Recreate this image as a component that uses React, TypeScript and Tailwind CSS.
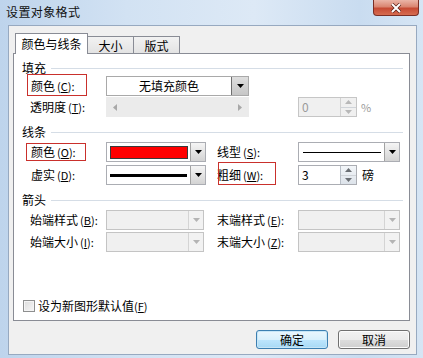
import React from "react";

function Down({ color = "#000" }: { color?: string }) {
  return (
    <svg width="7" height="4" viewBox="0 0 7 4">
      <path d="M0 0H7L3.5 4Z" fill={color} />
    </svg>
  );
}

function Acc({ k }: { k: string }) {
  return (
    <span className="ml-[2px] text-[11px]">
      (<span className="underline underline-offset-[1px]">{k}</span>):
    </span>
  );
}

function Header({ text }: { text: string }) {
  return (
    <div className="flex items-center h-[14px] ml-[8px] mr-[6px]">
      <span>{text}</span>
      <div className="flex-1 h-px bg-[#d5dde6] ml-[5px]" />
    </div>
  );
}

function BtnGray() {
  return (
    <div className="h-full w-[15px] border-l border-[#a2a2a2] bg-gradient-to-b from-[#f5f5f5] to-[#d3d3d3] flex items-center justify-center">
      <Down />
    </div>
  );
}

function BtnDisabled() {
  return (
    <div className="h-full w-[15px] border-l border-[#d4d4d4] bg-[#f2f2f2] flex items-center justify-center">
      <Down color="#b4b4b4" />
    </div>
  );
}

function DisCombo({ w }: { w: "a" | "b" }) {
  return (
    <div
      className={`h-full flex border border-[#c4c4c4] bg-[#f0f0f0] ${
        w === "a" ? "w-[98px]" : "w-[102px]"
      }`}
    >
      <div className="flex-1" />
      <BtnDisabled />
    </div>
  );
}

function Spinner({ value, disabled }: { value: string; disabled?: boolean }) {
  return (
    <div
      className={`w-[59px] h-full flex border ${
        disabled ? "border-[#c6c6c6] bg-[#f0f0f0] text-[#9a9a9a]" : "border-[#abadb3] bg-white text-black"
      }`}
    >
      <div className="flex-1 pl-[3px] flex items-center">{value}</div>
      <div
        className={`w-[16px] h-full flex flex-col border-l ${
          disabled ? "border-[#d2d2d2]" : "border-[#b9bfc7] bg-gradient-to-b from-[#f3f6f9] to-[#dde3ea]"
        }`}
      >
        <div className="flex-1 flex items-center justify-center border-b border-[#d0d4d9]">
          <svg width="7" height="4" viewBox="0 0 7 4">
            <path d="M0 4H7L3.5 0Z" fill={disabled ? "#b8b8b8" : "#6b6f74"} />
          </svg>
        </div>
        <div className="flex-1 flex items-center justify-center">
          <Down color={disabled ? "#b8b8b8" : "#6b6f74"} />
        </div>
      </div>
    </div>
  );
}

function RedBox({ cls }: { cls: string }) {
  return <span className={`absolute border border-[#c9302c] pointer-events-none ${cls}`} />;
}

function WinButton({ children, def }: { children: React.ReactNode; def?: boolean }) {
  return (
    <div
      className={`w-[72px] h-[19px] rounded-[3px] border flex items-center justify-center ${
        def
          ? "border-[#3c7fb1] bg-[linear-gradient(180deg,#eaf6fd_0%,#d9f0fc_50%,#bee6fd_51%,#a7d9f5_100%)] shadow-[inset_0_0_0_1px_#c7e6f7]"
          : "border-[#707070] bg-[linear-gradient(180deg,#f2f2f2_0%,#ebebeb_50%,#dddddd_51%,#cfcfcf_100%)] shadow-[inset_0_0_0_1px_#fcfcfc]"
      }`}
    >
      {children}
    </div>
  );
}

export default function App() {
  return (
    <div className="font-['Noto_Sans_CJK_SC','Noto_Sans',sans-serif] w-[423px] h-[358px] overflow-hidden text-[12px] leading-[14px] text-black bg-[linear-gradient(90deg,#bed4ec_0%,#d2e2f3_30%,#dde9f6_60%,#c9dcf0_85%,#d6e5f4_100%)] flex flex-col">
      {/* Title bar */}
      <div className="h-[25px] shrink-0 flex items-start">
        <div className="pl-[6px] pt-[5px] tracking-[0.4px] text-[#111]">设置对象格式</div>
        <div className="ml-auto mr-[4px] w-[46px] h-[16px] rounded-b-[4px] border border-t-0 border-[#7a2e25] bg-[linear-gradient(180deg,#ebb5a8_0%,#da8571_45%,#c64a34_55%,#d66c50_100%)] flex items-center justify-center">
          <svg width="12" height="10" viewBox="0 0 12 10">
            <path d="M2 1L10 9M10 1L2 9" stroke="#5a2018" strokeWidth="3.4" />
            <path d="M2 1L10 9M10 1L2 9" stroke="#fff" strokeWidth="2" />
          </svg>
        </div>
      </div>

      {/* Client area */}
      <div className="ml-[8px] w-[409px] h-[330px] bg-[#f0f0f0] border border-[#97a9c0] flex flex-col pt-[7px]">
        {/* Tabs */}
        <div className="flex items-end ml-[6px] h-[21px] relative z-10 -mb-px">
          <div className="h-[21px] w-[73px] border border-b-0 border-[#898c95] bg-white flex items-start justify-center pt-[3px]">
            颜色与线条
          </div>
          <div className="h-[17px] w-[47px] -ml-px mb-px border border-b-0 border-[#898c95] bg-gradient-to-b from-[#f2f2f2] to-[#e3e3e3] flex items-start justify-center pt-[2px]">
            大小
          </div>
          <div className="h-[17px] w-[47px] -ml-px mb-px border border-b-0 border-[#898c95] bg-gradient-to-b from-[#f2f2f2] to-[#e3e3e3] flex items-start justify-center pt-[2px]">
            版式
          </div>
        </div>

        {/* Panel */}
        <div className="ml-[4px] w-[397px] h-[268px] border border-[#898c95] bg-white flex flex-col pt-[7px]">
          <Header text="填充" />

          {/* Row 1 */}
          <div className="flex h-[20px] mt-[1px] pl-[13px] items-stretch">
            <div className="w-[79px] relative flex items-center pl-[4px]">
              颜色<Acc k="C" />
              <RedBox cls="left-0 top-[-2px] w-[60px] h-[22px]" />
            </div>
            <div className="w-[143px] flex border border-[#a9a9a9] bg-white">
              <div className="flex-1 flex items-center justify-center">无填充颜色</div>
              <div className="h-full w-[17px] border-l border-[#6e6e6e] bg-gradient-to-b from-[#dedede] to-[#c6c6c6] flex items-center justify-center">
                <Down />
              </div>
            </div>
          </div>

          {/* Row 2 */}
          <div className="flex h-[20px] mt-[1px] pl-[13px] items-stretch">
            <div className="w-[79px] flex items-center pl-[3px]">
              透明度<Acc k="T" />
            </div>
            <div className="w-[143px] bg-[#ebebeb] flex items-center justify-between px-[7px]">
              <svg width="4" height="7" viewBox="0 0 4 7">
                <path d="M4 0V7L0 3.5Z" fill="#a8a8a8" />
              </svg>
              <svg width="4" height="7" viewBox="0 0 4 7">
                <path d="M0 0V7L4 3.5Z" fill="#a8a8a8" />
              </svg>
            </div>
            <div className="ml-[49px]">
              <Spinner value="0" disabled />
            </div>
            <div className="ml-[4px] flex items-center text-[#9a9a9a] text-[11px]">%</div>
          </div>

          <div className="mt-[8px]">
            <Header text="线条" />
          </div>

          {/* Row 3 */}
          <div className="flex h-[20px] mt-[3px] pl-[13px] items-stretch">
            <div className="w-[79px] relative flex items-center pl-[4px]">
              颜色<Acc k="O" />
              <RedBox cls="left-[-1px] top-[1px] w-[60px] h-[18px]" />
            </div>
            <div className="w-[100px] flex border border-[#abadb3] bg-white">
              <div className="flex-1 flex items-center pl-[3px]">
                <div className="w-[78px] h-[13px] bg-[#ff0000] border border-[#3a3a3a]" />
              </div>
              <BtnGray />
            </div>
            <div className="ml-[11px] w-[81px] flex items-center">
              线型<Acc k="S" />
            </div>
            <div className="w-[102px] flex border border-[#abadb3] bg-white">
              <div className="flex-1 flex items-center pl-[4px] pr-[3px]">
                <div className="w-full h-px bg-black" />
              </div>
              <BtnGray />
            </div>
          </div>

          {/* Row 4 */}
          <div className="flex h-[20px] mt-[3px] pl-[13px] items-stretch">
            <div className="w-[79px] flex items-center pl-[4px]">
              虚实<Acc k="D" />
            </div>
            <div className="w-[100px] flex border border-[#abadb3] bg-white">
              <div className="flex-1 flex items-center pl-[3px] pr-[3px]">
                <div className="w-full h-[3px] bg-black" />
              </div>
              <BtnGray />
            </div>
            <div className="ml-[11px] w-[81px] relative flex items-center">
              粗细<Acc k="W" />
              <RedBox cls="left-[1px] top-[-3px] w-[58px] h-[23px]" />
            </div>
            <Spinner value="3" />
            <div className="ml-[5px] flex items-center">磅</div>
          </div>

          <div className="mt-[8px]">
            <Header text="箭头" />
          </div>

          {/* Row 5 */}
          <div className="flex h-[20px] mt-[3px] pl-[13px] items-stretch">
            <div className="w-[79px] flex items-center pl-[3px]">
              始端样式<Acc k="B" />
            </div>
            <DisCombo w="a" />
            <div className="ml-[13px] w-[81px] flex items-center">
              末端样式<Acc k="E" />
            </div>
            <DisCombo w="b" />
          </div>

          {/* Row 6 */}
          <div className="flex h-[20px] mt-[2px] pl-[13px] items-stretch">
            <div className="w-[79px] flex items-center pl-[3px]">
              始端大小<Acc k="I" />
            </div>
            <DisCombo w="a" />
            <div className="ml-[13px] w-[81px] flex items-center">
              末端大小<Acc k="Z" />
            </div>
            <DisCombo w="b" />
          </div>

          {/* Checkbox */}
          <div className="flex items-center h-[14px] mt-[47px] ml-[9px]">
            <div className="w-[12px] h-[12px] border border-[#8e8f8f] bg-gradient-to-br from-[#dcdcdc] to-[#f6f6f6] shadow-[inset_0_0_0_1px_#f4f4f4]" />
            <span className="ml-[3px]">
              设为新图形默认值<span className="text-[11px]">(<span className="underline">F</span>)</span>
            </span>
          </div>
        </div>

        {/* Buttons */}
        <div className="ml-[4px] w-[397px] mt-[9px] flex justify-end gap-[10px]">
          <WinButton def>确定</WinButton>
          <WinButton>取消</WinButton>
        </div>
      </div>
    </div>
  );
}
